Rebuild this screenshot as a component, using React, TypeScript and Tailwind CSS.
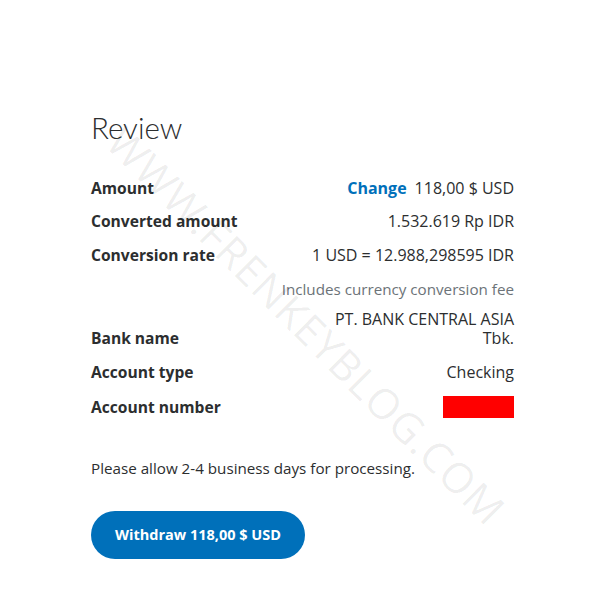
const font = { fontFamily: '"Open Sans", "Noto Sans", sans-serif' };

function Row({
  label,
  children,
  className = "",
}: {
  label?: string;
  children: React.ReactNode;
  className?: string;
}) {
  return (
    <div className={`flex items-end justify-between leading-5 text-[#2c2e2f] ${className}`}>
      <span className="text-[15.6px] font-bold">{label}</span>
      <div className="text-right text-[16px]">{children}</div>
    </div>
  );
}

export default function App() {
  return (
    <div className="relative h-[600px] w-[600px] overflow-hidden bg-white" style={font}>
      <div className="relative ml-[91px] w-[423px] pt-[110px]">
        <h1
          className="text-[29.5px] leading-9 font-light text-[#2c2e2f]"
          style={{ fontFamily: 'Lato, "Open Sans", sans-serif' }}
        >
          Review
        </h1>

        <div className="mt-8 flex flex-col">
          <Row label="Amount">
            <span className="mr-2 font-bold text-[#0070ba]">Change</span>
            118,00 $ USD
          </Row>
          <Row label="Converted amount" className="mt-[13px]">
            1.532.619 Rp IDR
          </Row>
          <Row label="Conversion rate" className="mt-[14px]">
            1 USD = 12.988,298595 IDR
          </Row>
          <Row className="mt-[14px]">
            <span className="text-[15.2px] text-[#6c7378]">Includes currency conversion fee</span>
          </Row>
          <Row label="Bank name" className="mt-[11px]">
            <div className="leading-[19px]">
              PT. BANK CENTRAL ASIA
              <br />
              Tbk.
            </div>
          </Row>
          <Row label="Account type" className="mt-[14px]">
            Checking
          </Row>
          <div className="mt-[14px] flex items-center justify-between leading-5 text-[#2c2e2f]">
            <span className="text-[15.6px] font-bold">Account number</span>
            <div className="h-[22px] w-[71px] bg-[#ff0000]" />
          </div>
        </div>

        <p className="mt-[40px] text-[15.2px] leading-5 text-[#2c2e2f]">
          Please allow 2-4 business days for processing.
        </p>

        <button className="mt-[33px] h-[48px] w-[214px] rounded-full bg-[#0070ba] text-[14.5px] font-bold text-white">
          Withdraw 118,00 $ USD
        </button>
      </div>

      {/* watermark */}
      <div
        aria-hidden
        className="pointer-events-none absolute left-[307px] top-[325px] -translate-x-1/2 -translate-y-1/2 rotate-[45deg] whitespace-nowrap text-[42px] tracking-[1px] text-[#000000]/[0.07]"
        style={{ fontFamily: '"Open Sans", sans-serif' }}
      >
        WWW.FRENKEYBLOG.COM
      </div>
    </div>
  );
}
